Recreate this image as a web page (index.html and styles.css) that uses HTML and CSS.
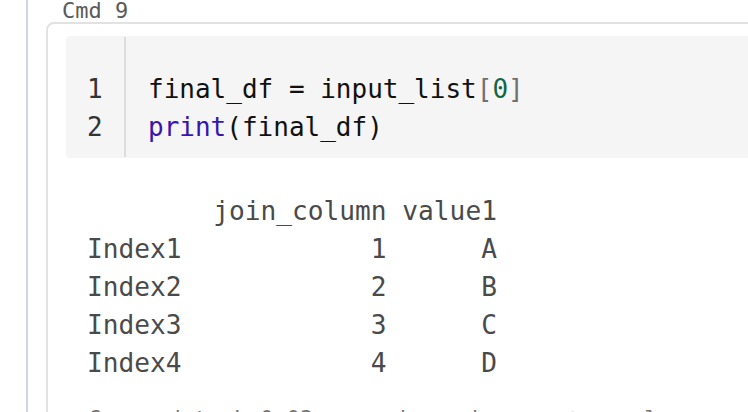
FILE: index.html
```html
<!DOCTYPE html>
<html>
<head>
<meta charset="utf-8">
<link rel="stylesheet" href="styles.css">
</head>
<body>
<div class="notebook">
  <div class="cmd-label">Cmd 9</div>
  <div class="cell">
    <div class="code">
      <div class="gutter">
        <div class="ln">1</div>
        <div class="ln">2</div>
      </div>
      <div class="source">
        <div class="line">final_df = input_list<span class="br">[</span><span class="num">0</span><span class="br">]</span></div>
        <div class="line"><span class="kw">print</span>(final_df)</div>
      </div>
    </div>
    <pre class="output">        join_column value1
Index1            1      A
Index2            2      B
Index3            3      C
Index4            4      D</pre>
    <div class="took">Command took 0.03 seconds -- by user@example.com at 7/11/2022, 3:17:14 PM on cluster</div>
  </div>
</div>
</body>
</html>
```
FILE: styles.css
```css
html, body {
  margin: 0;
  padding: 0;
  background: #ffffff;
  overflow: hidden;
  height: 412px;
}
.notebook {
  margin-left: 26px;
  border-left: 2px solid #cdd8e4;
  padding-left: 18px;
  height: 412px;
  box-sizing: border-box;
}
.cmd-label {
  font-family: "DejaVu Sans Mono", monospace;
  font-size: 22px;
  line-height: 22px;
  height: 22px;
  padding-left: 16px;
  color: #5a5a5a;
}
.cell {
  width: 760px;
  border: 2px solid #e2e2e2;
  border-radius: 8px;
  padding: 12px 0 0 18px;
  height: 500px;
  box-sizing: border-box;
}
.code {
  display: flex;
  background: #f5f5f5;
  border-radius: 4px;
  height: 122px;
  font-family: "DejaVu Sans Mono", monospace;
  font-size: 26px;
  line-height: 38px;
  color: #111;
}
.gutter {
  width: 60px;
  border-right: 2px solid #dddddd;
  margin: 1px 0;
  padding-top: 33px;
  box-sizing: border-box;
}
.ln {
  padding-left: 21px;
  color: #333;
}
.source {
  padding: 34px 0 0 22px;
}
.kw { color: #3a14b0; }
.br { color: #707070; }
.num { color: #116644; }
.output {
  margin: 34px 0 0 21px;
  font-family: "DejaVu Sans Mono", monospace;
  font-size: 26.2px;
  line-height: 38px;
  color: #4a4a4a;
}
.took {
  margin: 22px 0 0 22px;
  font-family: "DejaVu Sans Mono", monospace;
  font-size: 22px;
  line-height: 30px;
  color: #777;
  white-space: nowrap;
}
```
